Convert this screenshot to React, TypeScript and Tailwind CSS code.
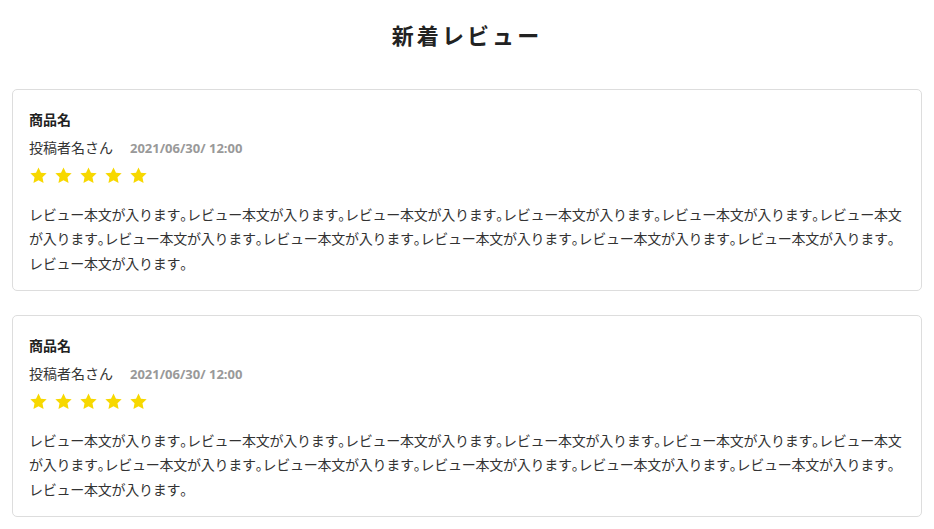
import React from 'react';

const Star = () => (
  <svg viewBox="0 0 24 24" className="w-[19px] h-[19px] fill-[#f7d800]">
    <path d="M12 1.8l3.1 6.6 7.2.9-5.3 5 1.4 7.1L12 17.9l-6.4 3.5 1.4-7.1-5.3-5 7.2-.9z" />
  </svg>
);

// 本文：句点は半角幅で詰めて表示
const ReviewBody = () => (
  <p className="mt-[17px] text-[14px] leading-[24.5px] tracking-[-0.25px] text-[#333]">
    {Array.from({ length: 12 }).map((_, i) => (
      <React.Fragment key={i}>
        レビュー本文が入ります<span className="[font-feature-settings:'halt']">。</span>
      </React.Fragment>
    ))}
  </p>
);

const ReviewCard = () => (
  <div className="border border-[#dddddd] rounded-[5px] px-[16px] pt-[19px] pb-[15px] bg-white">
    <p className="text-[14px] leading-[20px] font-bold text-[#222]">商品名</p>
    <div className="flex items-baseline gap-[17px] mt-[8px]">
      <span className="text-[14px] leading-[20px] text-[#333]">投稿者名さん</span>
      <span className="text-[13px] font-bold text-[#999] [font-family:'Open_Sans','Noto_Sans_CJK_JP',sans-serif]">2021/06/30/ 12:00</span>
    </div>
    <div className="flex gap-[6px] mt-[7px]">
      {[0, 1, 2, 3, 4].map((i) => (
        <Star key={i} />
      ))}
    </div>
    <ReviewBody />
  </div>
);

export default function App() {
  return (
    <div className="min-h-screen bg-white px-[12px] pb-[12px] [font-family:'Noto_Sans_CJK_JP',sans-serif]">
      <h1 className="text-center text-[22px] font-bold tracking-[0.14em] text-[#222] pt-[19px] pb-[40px] leading-[30px]">
        新着レビュー
      </h1>
      <div className="flex flex-col gap-[24px]">
        <ReviewCard />
        <ReviewCard />
      </div>
    </div>
  );
}
